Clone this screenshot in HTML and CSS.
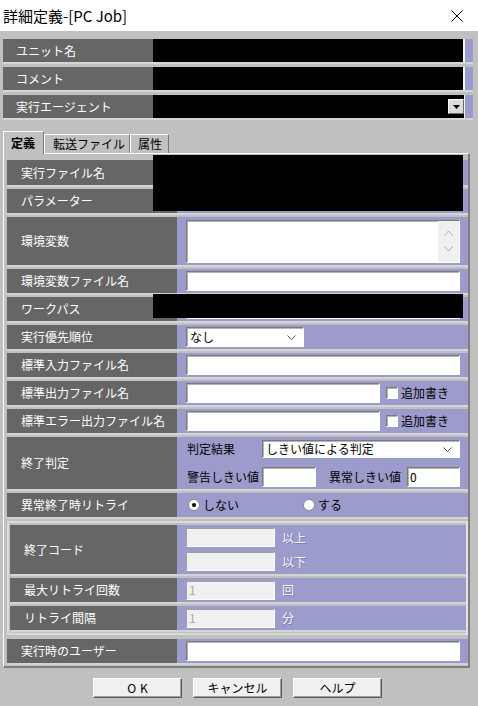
FILE: index.html
```html
<!DOCTYPE html>
<html lang="ja">
<head>
  <meta charset="UTF-8" />
  <meta name="viewport" content="width=device-width, initial-scale=1.0"/>
  <title>詳細定義-[PC Job]</title>
  <link rel="stylesheet" href="styles.css">
</head>
<body>

  <div class="titlebar">
    <span class="title">詳細定義-[PC Job]</span>
    <svg class="close" width="12" height="12" viewBox="0 0 12 12">
      <path d="M0.5 0.5 L11.5 11.5 M11.5 0.5 L0.5 11.5" stroke="#000" stroke-width="1" fill="none"/>
    </svg>
  </div>

  <div class="top-fields">
    <div class="field">
      <div class="label">ユニット名</div>
      <div class="value"><div class="redact-bar"></div></div>
    </div>
    <div class="field">
      <div class="label">コメント</div>
      <div class="value"><div class="redact-bar"></div></div>
    </div>
    <div class="field">
      <div class="label">実行エージェント</div>
      <div class="value">
        <div class="combo">
          <div class="combo-black"></div>
          <div class="drop-btn">
            <svg width="7" height="4" viewBox="0 0 7 4"><path d="M0 0 H7 L3.5 4 Z" fill="#000"/></svg>
          </div>
        </div>
      </div>
    </div>
  </div>

  <div class="tabs">
    <div class="tab active">定義</div>
    <div class="tab tab-transfer">転送ファイル</div>
    <div class="tab tab-attr">属性</div>
  </div>

  <div class="panel">
    <div class="rows">
      <div class="prow first">
        <div class="label">実行ファイル名</div>
        <div class="value"><div class="box wide"></div></div>
      </div>
      <div class="prow">
        <div class="label">パラメーター</div>
        <div class="value"><div class="box wide"></div></div>
      </div>
      <div class="prow env">
        <div class="label">環境変数</div>
        <div class="value">
          <div class="box textarea">
            <div class="scroll">
              <svg width="9" height="6" viewBox="0 0 9 6"><path d="M0.5 5.5 L4.5 1 L8.5 5.5" stroke="#a8a8a8" fill="none"/></svg>
              <svg width="9" height="6" viewBox="0 0 9 6"><path d="M0.5 0.5 L4.5 5 L8.5 0.5" stroke="#a8a8a8" fill="none"/></svg>
            </div>
          </div>
        </div>
      </div>
      <div class="prow">
        <div class="label">環境変数ファイル名</div>
        <div class="value"><div class="box wide"></div></div>
      </div>
      <div class="prow">
        <div class="label">ワークパス</div>
        <div class="value"><div class="box wide"></div></div>
      </div>
      <div class="prow">
        <div class="label">実行優先順位</div>
        <div class="value">
          <div class="box select priority">
            <span>なし</span>
            <svg width="9" height="5" viewBox="0 0 9 5"><path d="M0.5 0.5 L4.5 4.5 L8.5 0.5" stroke="#555" fill="none"/></svg>
          </div>
        </div>
      </div>
      <div class="prow">
        <div class="label">標準入力ファイル名</div>
        <div class="value"><div class="box wide"></div></div>
      </div>
      <div class="prow">
        <div class="label">標準出力ファイル名</div>
        <div class="value">
          <div class="box file"></div>
          <span class="check"></span><span class="check-text">追加書き</span>
        </div>
      </div>
      <div class="prow">
        <div class="label">標準エラー出力ファイル名</div>
        <div class="value">
          <div class="box file"></div>
          <span class="check"></span><span class="check-text">追加書き</span>
        </div>
      </div>
      <div class="prow judge">
        <div class="label">終了判定</div>
        <div class="value judge-value">
          <div class="line">
            <span class="caption">判定結果</span>
            <div class="box select judge-select">
              <span>しきい値による判定</span>
              <svg width="9" height="5" viewBox="0 0 9 5"><path d="M0.5 0.5 L4.5 4.5 L8.5 0.5" stroke="#555" fill="none"/></svg>
            </div>
          </div>
          <div class="line">
            <span class="caption">警告しきい値</span>
            <div class="box warn"></div>
            <span class="caption2">異常しきい値</span>
            <div class="box err">0</div>
          </div>
        </div>
      </div>
      <div class="prow">
        <div class="label">異常終了時リトライ</div>
        <div class="value">
          <span class="radio-item"><span class="radio checked"></span>しない</span>
          <span class="radio-item"><span class="radio"></span>する</span>
        </div>
      </div>

      <div class="group">
        <div class="prow code">
          <div class="label">終了コード</div>
          <div class="value code-value">
            <div class="line"><div class="box off"></div><span class="dim">以上</span></div>
            <div class="line"><div class="box off"></div><span class="dim">以下</span></div>
          </div>
        </div>
        <div class="prow">
          <div class="label">最大リトライ回数</div>
          <div class="value"><div class="box off">1</div><span class="dim">回</span></div>
        </div>
        <div class="prow">
          <div class="label">リトライ間隔</div>
          <div class="value"><div class="box off">1</div><span class="dim">分</span></div>
        </div>
      </div>

      <div class="prow">
        <div class="label">実行時のユーザー</div>
        <div class="value"><div class="box wide"></div></div>
      </div>
    </div>

    <!-- masked values -->
    <div class="mask mask-exec"></div>
    <div class="mask mask-work"></div>
  </div>

  <div class="buttons">
    <button class="ok">OK</button>
    <button>キャンセル</button>
    <button>ヘルプ</button>
  </div>

</body>
</html>
```

FILE: styles.css
```css
* {
  box-sizing: border-box;
}

html, body {
  margin: 0;
  padding: 0;
}

body {
  width: 478px;
  height: 706px;
  overflow: hidden;
  background: #c0c0c0;
  font-family: "Noto Sans CJK JP", "Noto Sans", sans-serif;
  font-size: 12px;
  color: #000;
}

/* title bar */
.titlebar {
  height: 31px;
  background: #fff;
  display: flex;
  align-items: center;
  justify-content: space-between;
  padding: 0 15px 0 3px;
}

.title {
  font-size: 15px;
  line-height: 1;
}

/* fields above the tabs */
.top-fields {
  display: flex;
  flex-direction: column;
  gap: 5px;
  padding: 8px 5px 0 3px;
}

.field {
  display: flex;
  height: 23px;
  box-shadow: 0 2px 0 #d6d6d6;
}

.label {
  background: #666;
  color: #fff;
  display: flex;
  align-items: center;
  white-space: nowrap;
  line-height: 1;
}

.field .label {
  width: 150px;
  padding-left: 13px;
}

.field .value {
  flex: 1;
  background: #9c9ccc;
  padding-right: 8px;
  display: flex;
}

.redact-bar {
  flex: 1;
  background: #000;
  border-right: 2px solid #f4f4f4;
}

.combo {
  flex: 1;
  display: flex;
  align-items: center;
  background: #000;
  border-right: 1px solid #f4f4f4;
}

.combo-black {
  flex: 1;
  align-self: stretch;
}

.drop-btn {
  width: 16px;
  height: 15px;
  background: #dcdcd8;
  border: 1px solid;
  border-color: #fff #6a6a6a #6a6a6a #fff;
  display: flex;
  align-items: center;
  justify-content: center;
}

/* tabs */
.tabs {
  display: flex;
  align-items: flex-end;
  height: 22px;
  margin-top: 13px;
  padding-left: 3px;
}

.tab {
  height: 19px;
  border: 1px solid;
  border-color: #fff #7a7a7a transparent #fff;
  border-bottom: none;
  display: flex;
  align-items: center;
  line-height: 1;
  white-space: nowrap;
  background: #c0c0c0;
}

.tab.active {
  width: 41px;
  height: 23px;
  margin-bottom: -1px;
  padding-left: 7px;
  font-weight: bold;
  position: relative;
  z-index: 1;
}

.tab-transfer {
  width: 86px;
  padding-left: 8px;
}

.tab-attr {
  width: 39px;
  padding-left: 7px;
}

/* tab panel */
.panel {
  position: relative;
  width: 467px;
  height: 515px;
  margin-left: 3px;
  border-left: 1px solid #fff;
  border-top: 1px solid #fff;
  border-right: 2px solid #7e7e7e;
  border-bottom: 2px solid #7e7e7e;
  padding: 6px 0 0 3px;
}

.rows {
  display: flex;
  flex-direction: column;
  gap: 4px;
}

.prow {
  display: flex;
  height: 24px;
  box-shadow: 0 2px 0 #d4d4d4;
}

.prow.first {
  height: 25px;
}

.prow.env {
  height: 48px;
}

.prow.judge {
  height: 52px;
}

.prow .label {
  width: 170px;
  padding-left: 14px;
}

.prow .value {
  flex: 1;
  background: #9c9ccc;
  display: flex;
  align-items: center;
  padding: 0 8px 0 9px;
  white-space: nowrap;
  line-height: 1;
}

/* input-like boxes */
.box {
  height: 20px;
  background: #fff;
  border: 1px solid;
  border-color: #7a7a7a #fff #fff #7a7a7a;
  box-shadow: inset 1px 1px 0 #b4b4b4;
  display: flex;
  align-items: center;
  padding-left: 2px;
  line-height: 1;
}

.box.wide {
  flex: 1;
}

.box.textarea {
  flex: 1;
  height: 43px;
  justify-content: flex-end;
  align-items: stretch;
  padding: 0;
}

.scroll {
  width: 21px;
  background: #f0f0f0;
  display: flex;
  flex-direction: column;
  justify-content: space-around;
  align-items: center;
  padding: 5px 0;
}

.box.select {
  justify-content: space-between;
  padding: 0 7px 0 3px;
}

.priority {
  width: 118px;
}

.box.file {
  width: 194px;
}

.check {
  width: 12px;
  height: 12px;
  margin-left: 6px;
  background: #fff;
  border: 1px solid;
  border-color: #7a7a7a #fff #fff #7a7a7a;
  box-shadow: inset 1px 1px 0 #b4b4b4;
}

.check-text {
  margin-left: 3px;
}

/* exit judgement */
.judge-value {
  flex-direction: column;
  align-items: stretch !important;
  justify-content: flex-start;
  gap: 9px;
  padding-top: 3px !important;
}

.judge-value .line {
  display: flex;
  align-items: center;
}

.caption {
  width: 76px;
  flex-shrink: 0;
  padding-left: 1px;
}

.judge-select {
  flex: 1;
  height: 18px;
}

.box.warn {
  width: 54px;
  flex-shrink: 0;
}

.caption2 {
  width: 91px;
  flex-shrink: 0;
  padding-left: 13px;
}

.box.err {
  flex: 1;
}

/* retry radios */
.radio-item {
  display: flex;
  align-items: center;
  width: 115px;
  padding-left: 2px;
}

.radio {
  width: 12px;
  height: 12px;
  border-radius: 50%;
  background: #fff;
  border: 1px solid #8a8a8a;
  margin-right: 3px;
  display: flex;
  align-items: center;
  justify-content: center;
}

.radio.checked::after {
  content: '';
  width: 4px;
  height: 4px;
  border-radius: 50%;
  background: #000;
}

/* retry group */
.group {
  border: 2px solid #dadada;
  border-right-color: #e4e4e4;
  padding: 2px 0 3px 1px;
  display: flex;
  flex-direction: column;
  gap: 4px;
}

.group .prow .label {
  width: 167px;
}

.prow.code {
  height: 49px;
}

.code-value {
  flex-direction: column;
  align-items: stretch !important;
  justify-content: center;
  gap: 5px;
}

.code-value .line {
  display: flex;
  align-items: center;
}

.box.off {
  width: 89px;
  height: 19px;
  background: #f0f0f0;
  border-color: #a0a0a0 #fff #fff #a0a0a0;
  box-shadow: none;
  color: #a8a8a8;
}

.dim {
  margin-left: 7px;
  color: #f4f4fa;
  text-shadow: 1px 1px 0 #7c7cae;
}

/* masked values */
.mask {
  position: absolute;
  left: 149px;
  width: 310px;
  background: #000;
}

.mask-exec {
  top: 1px;
  height: 56px;
}

.mask-work {
  top: 140px;
  height: 24px;
}

/* dialog buttons */
.buttons {
  display: flex;
  gap: 11px;
  padding-left: 93px;
  margin-top: 10px;
}

button {
  width: 89px;
  height: 20px;
  font-family: "Noto Sans CJK JP", "Noto Sans", sans-serif;
  font-size: 12px;
  line-height: 1;
  padding: 0;
  background: #f0f0f0;
  border: 1px solid;
  border-color: #fff #5a5a5a #5a5a5a #fff;
  box-shadow: inset -1px -1px 0 #a0a0a0;
  color: #000;
}

button.ok {
  letter-spacing: 4px;
  padding-left: 4px;
}
```
